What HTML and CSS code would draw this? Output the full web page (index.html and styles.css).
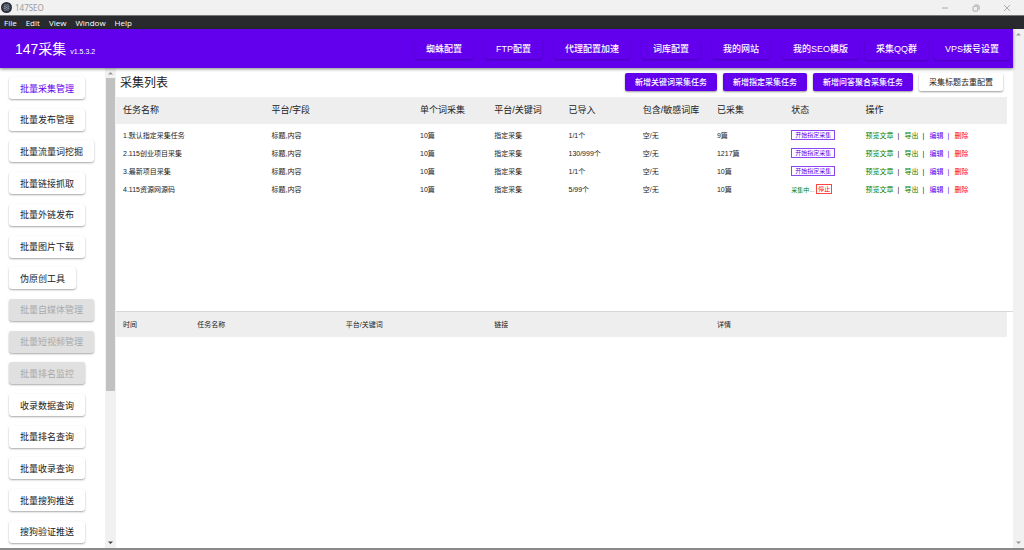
FILE: index.html
```html
<!DOCTYPE html>
<html lang="zh-CN">
<head>
<meta charset="utf-8">
<title>147SEO</title>
<link rel="stylesheet" href="styles.css">
</head>
<body>
<div class="window">
  <div class="titlebar">
    <svg class="app-icon" viewBox="0 0 24 24" aria-hidden="true">
      <circle cx="12" cy="12" r="12" fill="#2b2e3a"/>
      <g fill="none" stroke="#9aa9b8" stroke-width="1">
        <ellipse cx="12" cy="12" rx="8" ry="3.2"/>
        <ellipse cx="12" cy="12" rx="8" ry="3.2" transform="rotate(60 12 12)"/>
        <ellipse cx="12" cy="12" rx="8" ry="3.2" transform="rotate(120 12 12)"/>
      </g>
      <circle cx="12" cy="12" r="1.3" fill="#9aa9b8"/>
    </svg>
    <span class="app-title">147SEO</span>
    <div class="window-controls">
      <button class="control" aria-label="最小化"><svg viewBox="0 0 8 8"><path d="M1 4h6"/></svg></button>
      <button class="control" aria-label="还原"><svg viewBox="0 0 8 8"><rect x="1" y="2.3" width="4.8" height="4.8" rx="1"/><path d="M2.6 1h3.1q1.5 0 1.5 1.5v3.1"/></svg></button>
      <button class="control" aria-label="关闭"><svg viewBox="0 0 8 8"><path d="M1 1l6 6M7 1l-6 6"/></svg></button>
    </div>
  </div>
  <div class="menubar">
    <button>File</button><button>Edit</button><button>View</button><button>Window</button><button>Help</button>
  </div>
  <div class="viewport">
    <div class="app">
      <header class="header">
        <h1 class="brand">147采集 <small>v1.5.3.2</small></h1>
        <nav class="nav">
          <button>蜘蛛配置</button>
          <button>FTP配置</button>
          <button>代理配置加速</button>
          <button>词库配置</button>
          <button>我的网站</button>
          <button>我的SEO模版</button>
          <div class="nav-links">
            <button>采集QQ群</button>
            <button>VPS拨号设置</button>
          </div>
        </nav>
      </header>
      <div class="body">
        <aside class="sidebar">
          <button class="active">批量采集管理</button>
          <button>批量发布管理</button>
          <button>批量流量词挖掘</button>
          <button>批量链接抓取</button>
          <button>批量外链发布</button>
          <button>批量图片下载</button>
          <button>伪原创工具</button>
          <button disabled>批量自媒体管理</button>
          <button disabled>批量短视频管理</button>
          <button disabled>批量排名监控</button>
          <button>收录数据查询</button>
          <button>批量排名查询</button>
          <button>批量收录查询</button>
          <button>批量搜狗推送</button>
          <button>搜狗验证推送</button>
        </aside>
        <div class="scrollbar">
          <svg viewBox="0 0 11 10"><path class="dim" d="M3 6.5L5.5 4L8 6.5z"/></svg>
          <div class="track"><div class="thumb"></div></div>
          <svg viewBox="0 0 11 10"><path d="M3 3.5L5.5 6L8 3.5z"/></svg>
        </div>
        <main class="main">
          <section class="pane">
            <div class="toolbar">
              <h2>采集列表</h2>
              <div class="actions">
                <button class="primary">新增关键词采集任务</button>
                <button class="primary">新增指定采集任务</button>
                <button class="primary">新增问答聚合采集任务</button>
                <button>采集标题去重配置</button>
              </div>
            </div>
            <table class="grid tasks">
              <colgroup><col span="2" class="wide"><col span="6"><col class="wide"></colgroup>
              <thead>
                <tr><th>任务名称</th><th>平台/字段</th><th>单个词采集</th><th>平台/关键词</th><th>已导入</th><th>包含/敏感词库</th><th>已采集</th><th>状态</th><th>操作</th></tr>
              </thead>
              <tbody>
                <tr><td>1.默认指定采集任务</td><td>标题,内容</td><td>10篇</td><td>指定采集</td><td>1/1个</td><td>空/无</td><td>9篇</td>
                  <td><button class="start">开始指定采集</button></td>
                  <td><div class="ops"><a class="go" href="#">预览文章</a><i>|</i><a class="go" href="#">导出</a><i>|</i><a class="edit" href="#">编辑</a><i class="edit">|</i><a class="stop" href="#">删除</a></div></td></tr>
                <tr><td>2.115创业项目采集</td><td>标题,内容</td><td>10篇</td><td>指定采集</td><td>130/999个</td><td>空/无</td><td>1217篇</td>
                  <td><button class="start">开始指定采集</button></td>
                  <td><div class="ops"><a class="go" href="#">预览文章</a><i>|</i><a class="go" href="#">导出</a><i>|</i><a class="edit" href="#">编辑</a><i class="edit">|</i><a class="stop" href="#">删除</a></div></td></tr>
                <tr><td>3.最新项目采集</td><td>标题,内容</td><td>10篇</td><td>指定采集</td><td>1/1个</td><td>空/无</td><td>10篇</td>
                  <td><button class="start">开始指定采集</button></td>
                  <td><div class="ops"><a class="go" href="#">预览文章</a><i>|</i><a class="go" href="#">导出</a><i>|</i><a class="edit" href="#">编辑</a><i class="edit">|</i><a class="stop" href="#">删除</a></div></td></tr>
                <tr><td>4.115资源网源码</td><td>标题,内容</td><td>10篇</td><td>指定采集</td><td>5/99个</td><td>空/无</td><td>10篇</td>
                  <td><div class="running"><span class="go">采集中...</span><button class="stop">停止</button></div></td>
                  <td><div class="ops"><a class="go" href="#">预览文章</a><i>|</i><a class="go" href="#">导出</a><i>|</i><a class="edit" href="#">编辑</a><i class="edit">|</i><a class="stop" href="#">删除</a></div></td></tr>
              </tbody>
            </table>
          </section>
          <section class="pane log">
            <table class="grid">
              <colgroup><col><col span="2" class="wide"><col class="link"><col class="detail"></colgroup>
              <thead><tr><th>时间</th><th>任务名称</th><th>平台/关键词</th><th>链接</th><th>详情</th></tr></thead>
            </table>
          </section>
        </main>
      </div>
    </div>
    <div class="scrollbar">
      <svg viewBox="0 0 11 10"><path class="dim" d="M3 6.5L5.5 4L8 6.5z"/></svg>
      <div class="track"></div>
      <svg viewBox="0 0 11 10"><path class="dim" d="M3 3.5L5.5 6L8 3.5z"/></svg>
    </div>
  </div>
</div>
</body>
</html>
```
FILE: styles.css
```css
* { box-sizing: border-box; }

body {
  margin: 0;
  font-family: "Liberation Sans", "Noto Sans CJK SC", sans-serif;
  font-size: 9px;
  color: #222;
  background: #fff;
}

button {
  margin: 0;
  padding: 0;
  border: 0;
  background: none;
  color: inherit;
  font: inherit;
  white-space: nowrap;
}

h1, h2 { margin: 0; font-weight: 400; }
a { text-decoration: none; }

.window {
  display: flex;
  flex-direction: column;
  height: 100vh;
  border-bottom: 2px solid #8a8a8a;
}

/* Window frame */
.titlebar {
  display: flex;
  align-items: center;
  gap: 3px;
  height: 15px;
  padding: 0 12px 0 1px;
  background: #f1f1f1;
  color: #999;
  font-family: "Noto Sans", sans-serif;
  font-size: 8px;
}
.app-icon { width: 11px; height: 11px; }
.window-controls { display: flex; gap: 21px; margin-left: auto; }
.control { display: flex; width: 10px; }
.control svg { width: 10px; height: 8px; fill: none; stroke: #999; stroke-width: 0.8; }

.menubar {
  display: flex;
  align-items: center;
  gap: 9px;
  height: 14px;
  padding: 0 4px;
  border-top: 1px solid #777;
  background: #292a2d;
  color: #fff;
  font-family: "Open Sans", sans-serif;
  font-size: 8px;
}

.viewport { display: flex; flex: 1; min-height: 0; }
.app { display: flex; flex: 1; flex-direction: column; min-width: 0; }

/* Header */
.header {
  position: relative;
  z-index: 1;
  display: flex;
  align-items: center;
  justify-content: space-between;
  height: 39px;
  padding: 0 3px 0 15px;
  background: #6200ee;
  color: #fff;
  box-shadow: 0 1px 3px rgba(0, 0, 0, 0.5);
}
.brand { padding-bottom: 2px; font-size: 14px; }
.brand small { font-size: 7px; }
.nav { display: flex; align-items: center; gap: 12px; }
.nav-links { display: flex; gap: 6px; margin-left: -6px; }
.nav button {
  height: 20px;
  padding: 0 11px;
  border-radius: 3px;
  font-weight: 500;
  box-shadow: 0 1px 2px rgba(0, 0, 0, 0.25);
}
.nav .nav-links button { height: 22px; }

.body { display: flex; flex: 1; min-height: 0; }

/* Sidebar */
.sidebar {
  display: flex;
  flex-direction: column;
  align-items: flex-start;
  justify-content: space-between;
  width: 105px;
  padding: 9px 9px 5px;
}
.sidebar button {
  height: 22px;
  padding: 0 11px;
  border-radius: 3px;
  background: #fff;
  box-shadow: 0 1px 2px rgba(0, 0, 0, 0.35);
}
.sidebar .active { color: #6200ee; }
.sidebar button:disabled { background: #e0e0e0; color: #aaa; }

/* Scrollbars */
.scrollbar {
  display: flex;
  flex-direction: column;
  width: 11px;
  background: #f1f1f1;
}
.scrollbar svg { width: 11px; height: 10px; fill: #444; }
.scrollbar .dim { fill: #999; }
.track { flex: 1; padding: 0 1px; }
.thumb { height: 68%; background: #c1c1c1; }

/* Main panes */
.main {
  display: grid;
  flex: 1;
  grid-template-rows: 243fr 237fr;
  min-width: 0;
}
.pane { padding-right: 6px; }
.log { border-top: 1px solid #d8d8d8; }

.toolbar {
  display: flex;
  align-items: center;
  justify-content: space-between;
  height: 29px;
  padding: 0 4px 2px;
}
.toolbar h2 { font-size: 12px; }
.actions { display: flex; gap: 6px; }
.actions button {
  height: 18px;
  padding: 0 10px;
  border-radius: 2px;
  background: #fff;
  font-size: 8px;
  box-shadow: 0 1px 2px rgba(0, 0, 0, 0.4);
}
.actions .primary { background: #6200ee; color: #fff; font-weight: 500; }

/* Tables */
.grid {
  width: 100%;
  border-collapse: collapse;
  table-layout: fixed;
  font-size: 7px;
}
.grid col { width: 8.333%; }
.grid .wide { width: 16.667%; }
.grid .link { width: 25%; }
.grid .detail { width: 33.333%; }
.grid th, .grid td {
  padding: 0 0 2px 7px;
  text-align: left;
  white-space: nowrap;
}
.grid th { height: 25px; background: #eee; font-weight: 400; }
.tasks th { height: 27px; font-size: 9px; }
.tasks td { height: 18px; }
.tasks tbody::before { content: ""; display: table-row; height: 3px; }

.start {
  display: block;
  height: 10px;
  padding: 0 3px;
  border: 1px solid #8b46f2;
  color: #6200ee;
  font-size: 6px;
  line-height: 8px;
}
.running { display: flex; align-items: center; gap: 2px; font-size: 6px; }
.running button {
  height: 10px;
  padding: 0 1px;
  border: 1px solid #f44;
  line-height: 8px;
}
.ops { display: flex; align-items: baseline; }
.ops i { width: 11px; padding-left: 4px; font-style: normal; }
.go { color: #008000; }
.edit { color: #6200ee; }
.stop { color: #f00; }
```
